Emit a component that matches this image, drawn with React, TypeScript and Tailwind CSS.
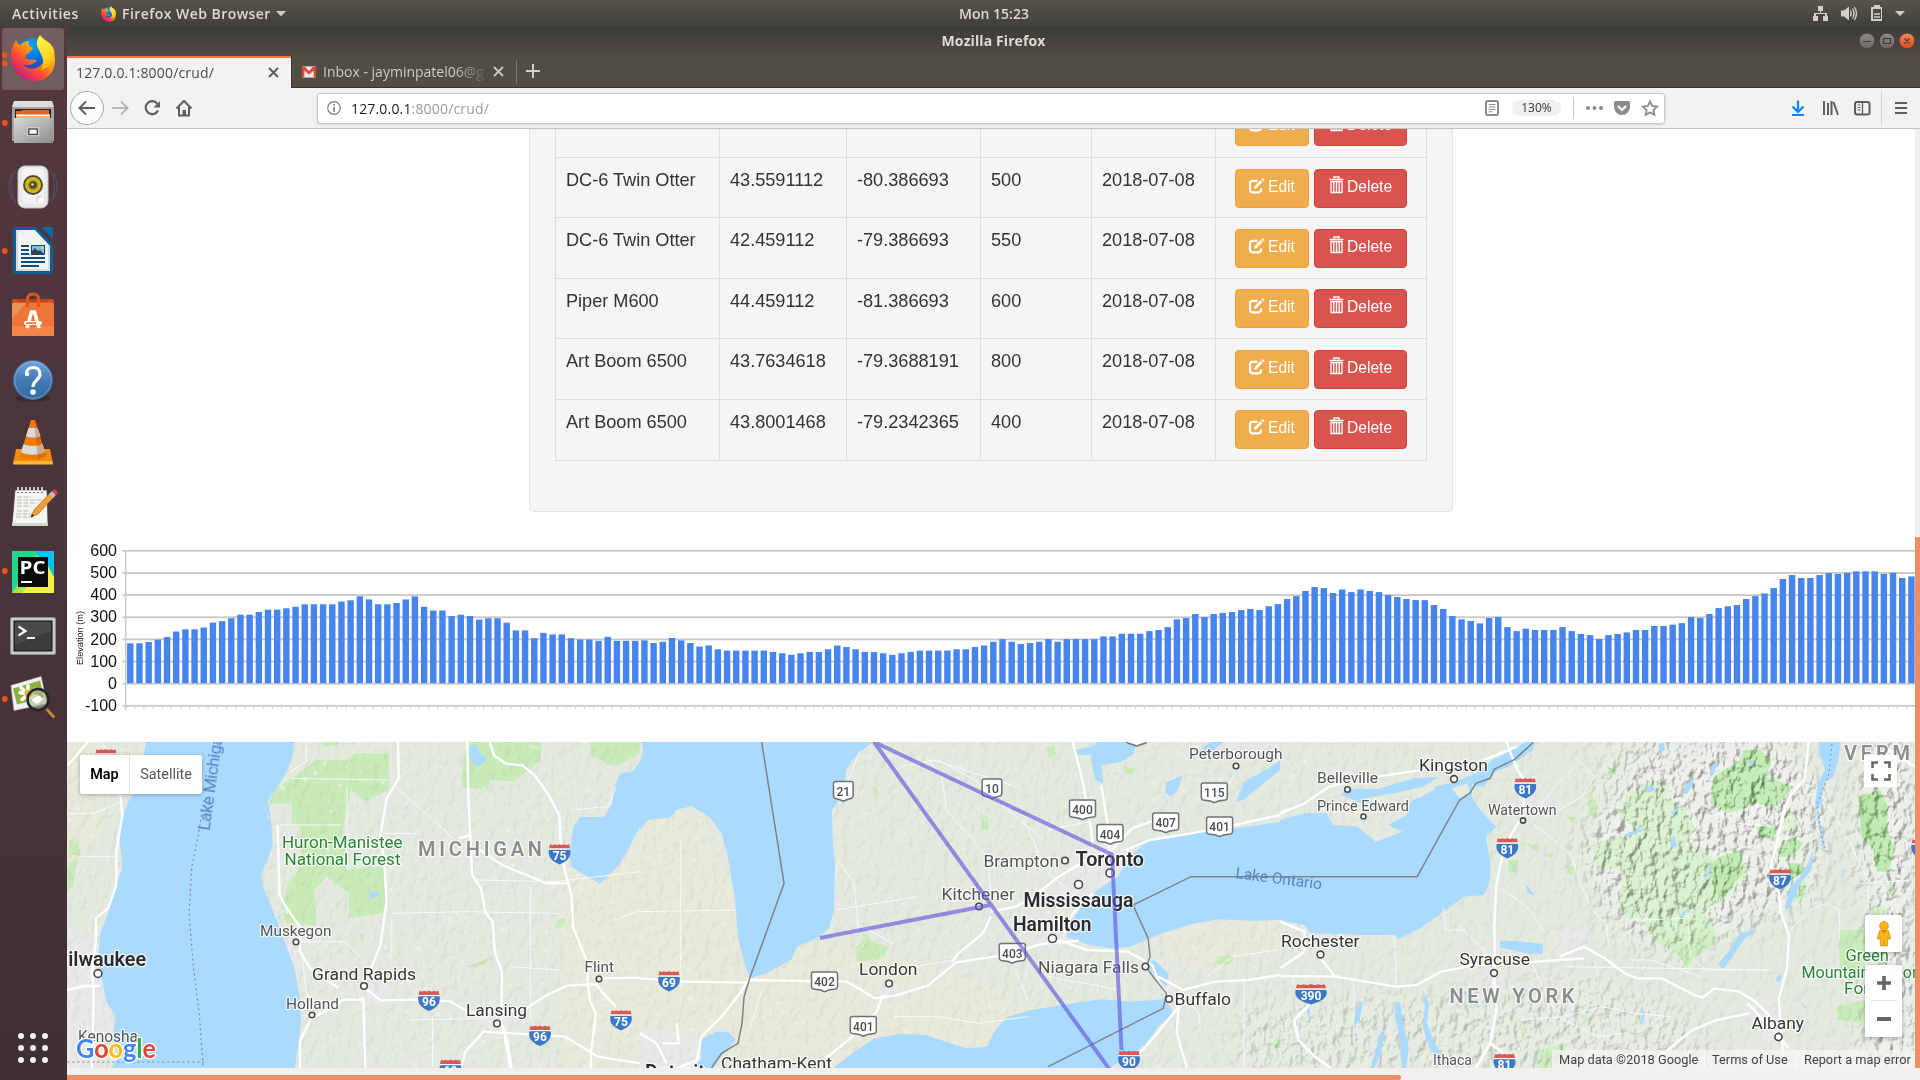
import React from 'react';

const UI = "font-['Open_Sans','Noto_Sans',sans-serif]";
const ARIAL = "font-['Liberation_Sans',Arial,sans-serif]";
const ROBOTO = 'font-[Roboto,sans-serif]';

/* ------------------------------------------------------------------ */
/* Launcher icons                                                      */
/* ------------------------------------------------------------------ */

function FirefoxGlyph() {
  return (
    <g>
      <defs>
        <radialGradient id="ffBlue" cx="0.5" cy="0.2" r="0.8">
          <stop offset="0" stopColor="#0aa5f2" />
          <stop offset="0.5" stopColor="#0a6be0" />
          <stop offset="1" stopColor="#2b2b83" />
        </radialGradient>
        <linearGradient id="ffFire" x1="0.85" y1="0.1" x2="0.15" y2="0.9">
          <stop offset="0" stopColor="#ffd72e" />
          <stop offset="0.35" stopColor="#ff9a12" />
          <stop offset="0.65" stopColor="#ff4a36" />
          <stop offset="1" stopColor="#c4158c" />
        </linearGradient>
        <linearGradient id="ffTail" x1="0.3" y1="0" x2="0.7" y2="1">
          <stop offset="0" stopColor="#fff44a" />
          <stop offset="0.6" stopColor="#ffdb20" />
          <stop offset="1" stopColor="#ffa40f" />
        </linearGradient>
      </defs>
      <circle cx="32" cy="30" r="19" fill="url(#ffBlue)" />
      <path
        d="M16 13c-5 7-6 15-4 23 3 11 12 18 23 18 12 0 20-9 20-21 0-7-3-12-6-16l-6-3c3 9 4 18-1 23-5 6-15 6-19 0 4 2 8 1 11-1 2-1 3-2 2-3-3-1-8 1-10-2-1-3 2-4 3-5 1-2 3-3 4-5-3-1-5-3-4-7-4 0-7 2-9 4-2-1-3-3-4-5z"
        fill="url(#ffFire)"
      />
      <path d="M40 8c-4 5-4 10-1 15 3 6 7 12 2 20 10-2 15-11 13-20-2-6-6-8-9-10-2-2-4-3-5-5z" fill="url(#ffTail)" />
    </g>
  );
}

function FilesGlyph() {
  return (
    <g>
      <defs>
        <linearGradient id="fileG" x1="0" y1="0" x2="1" y2="1">
          <stop offset="0" stopColor="#d8d8d8" />
          <stop offset="1" stopColor="#8c8c8c" />
        </linearGradient>
      </defs>
      <path d="M14 10h38l2 8v32H12V18z" fill="#a2a2a2" />
      <path d="M14 10h38l2 6H12z" fill="#dedede" />
      <path d="M15 18h36v9H15z" fill="#2c2220" />
      <path d="M16 20l5 0 1-1h27v8H16z" fill="#e0641e" />
      <path d="M16 23h34v4H16z" fill="#f6b370" />
      <path d="M17 24h32v1H17z" fill="#fff" />
      <path d="M14 27h39v25H14z" fill="url(#fileG)" />
      <rect x="26.500" y="35.500" width="13" height="10" rx="1.500" fill="#cfcfcf" stroke="#b5b5b5" />
      <rect x="28.800" y="38" width="8.500" height="5.500" fill="#f2f2f2" stroke="#3a3a3a" strokeWidth="1.200" />
    </g>
  );
}

function RhythmboxGlyph() {
  return (
    <g>
      <g fill="none" stroke="#54699a" strokeWidth="1.200" opacity="0.45">
        <path d="M16 14c-6 9-6 24 0 34M12 18c-4 8-4 17 0 26M50 14c6 9 6 24 0 34M54 18c4 8 4 17 0 26" />
      </g>
      <rect x="18" y="11" width="30" height="42" rx="7" fill="#e9eae8" stroke="#c3c4c1" />
      <rect x="22" y="13" width="22" height="36" rx="6" fill="#f7f7f6" opacity="0.7" />
      <circle cx="33" cy="30" r="10" fill="#4d4a46" />
      <circle cx="33" cy="30" r="8" fill="#d4b816" />
      <circle cx="33" cy="30" r="4.800" fill="#8f7a0c" />
      <circle cx="33" cy="30" r="3.200" fill="#45484b" />
      <circle cx="32.500" cy="29.500" r="1.300" fill="#dcdcdc" />
      <circle cx="39.500" cy="44" r="3.500" fill="#d5d6d3" />
      <circle cx="40.500" cy="45" r="3" fill="#fff" />
    </g>
  );
}

function WriterGlyph() {
  return (
    <g>
      <path d="M16 8h20l17 18v26a3 3 0 0 1-3 3H16a3 3 0 0 1-3-3V11a3 3 0 0 1 3-3z" fill="#0b5f95" />
      <path d="M41 8h10a2 2 0 0 1 2 2v10z" fill="#0b6aa8" />
      <path d="M16 11h19l15 16v25H16z" fill="#f3f3f3" />
      <path d="M16 11v41h34V27M18 11v39h30V27z" fill="#c9c9c9" fillRule="evenodd" opacity="0.6" />
      <path d="M21 26h8v2h-8zM21 30h8v2h-8zM21 34h8v2h-8zM21 38h24v2H21zM21 42h24v2H21zM21 46h18v2H21z" fill="#07507d" />
      <rect x="31" y="26" width="14" height="10" fill="#07507d" />
      <rect x="32" y="27" width="12" height="8" fill="#77c0ef" />
      <path d="M32 35v-3l3-3 3 3 2-1 4 4z" fill="#3a4045" />
      <circle cx="42.500" cy="28.500" r="1.500" fill="#f2c24a" />
    </g>
  );
}

function SoftwareGlyph() {
  return (
    <g>
      <path d="M12 16h42v6H12z" fill="#b8451a" />
      <path d="M14 16l5 3 27 0 6-3v6H14z" fill="#d65a22" />
      <path d="M12 20h42v33H12z" fill="#ef7437" />
      <path d="M12 43h42v10H12z" fill="#f38549" />
      <path d="M12 20h14L12 36z" fill="#e79a5c" opacity="0.8" />
      <path d="M27.500 24v-8q0-5 5.500-5t5.500 5v8" fill="none" stroke="#e0561f" strokeWidth="3" />
      <path d="M27 45l4.500-16h3L39 45" fill="none" stroke="#fff" strokeWidth="3.600" />
      <rect x="24" y="38" width="18" height="4" rx="2" fill="#fff" />
      <rect x="26" y="39.300" width="10" height="1.600" fill="#ef7437" />
    </g>
  );
}

function HelpGlyph() {
  return (
    <g>
      <defs>
        <linearGradient id="helpG" x1="0" y1="0" x2="0" y2="1">
          <stop offset="0" stopColor="#78a6dd" />
          <stop offset="0.5" stopColor="#4379b5" />
          <stop offset="1" stopColor="#2f6c9f" />
        </linearGradient>
      </defs>
      <ellipse cx="33" cy="51" rx="17" ry="4" fill="#2b1f24" opacity="0.45" />
      <circle cx="33" cy="33" r="19.500" fill="url(#helpG)" stroke="#3a6a9a" />
      <circle cx="33" cy="33" r="18.300" fill="none" stroke="#9cc1ea" strokeWidth="0.800" opacity="0.7" />
      <path d="M26.500 26c0-7 13.500-8 13.500 1 0 6-7 6.500-7 13" fill="none" stroke="#fff" strokeWidth="3.200" />
      <circle cx="27" cy="27" r="2.200" fill="#fff" />
      <circle cx="33" cy="45" r="2.800" fill="#fff" />
    </g>
  );
}

function VlcGlyph() {
  return (
    <g>
      <path d="M16 38h34l3 15H13z" fill="#f18a0d" />
      <path d="M14 50h38.500l.5 3.500H13z" fill="#ffb733" />
      <path d="M31 9h4l11 36c-4 5-22 5-26 0z" fill="#f07c05" />
      <path d="M28.500 17h9l3 8c-4 2-11 2-14.500 0z" fill="#d8dade" />
      <path d="M23.500 33c5 2.500 14 2.500 19 0l2.500 8c-5 3.500-19 3.500-24 0z" fill="#d8dade" />
      <path d="M34 9h1l11 36c-2 2-5 3-8 3.500z" fill="#b65203" opacity="0.35" />
    </g>
  );
}

function GeditGlyph() {
  return (
    <g>
      <path d="M15 15h32l1 35H12z" fill="#f4f4f0" stroke="#3c3a37" strokeWidth="0.700" />
      <path d="M12 48h36v3H12z" fill="#d5d6d0" />
      <g stroke="#efefef" strokeWidth="1.600">
        <path d="M18 12v5M22 12v5M26 12v5M30 12v5M34 12v5M38 12v5M42 12v5" />
      </g>
      <g stroke="#54524f" strokeWidth="0.800">
        <path d="M17 17.500h2M21 17.500h2M25 17.500h2M29 17.500h2M33 17.500h2M37 17.500h2M41 17.500h2" />
      </g>
      <g stroke="#b9b9b5" strokeWidth="1" strokeDasharray="5 1.500">
        <path d="M17 22h14M17 25h26M17 28h20M17 31h14M17 36h12M16 39h22M16 42h16" />
      </g>
      <path d="M31 42l3-7L50 18l4 4-16 17z" fill="#f0a13a" stroke="#a8661a" strokeWidth="0.700" />
      <path d="M49 19l3-3 4 4-3 3z" fill="#b9bfc4" />
      <path d="M52 16q2-3 4.500-.5T56 20z" fill="#d9364a" />
      <path d="M31 42l1-3 2 2z" fill="#1b1b1b" />
    </g>
  );
}

function PyCharmGlyph() {
  return (
    <g>
      <rect x="12" y="12" width="42" height="42" fill="#21d789" />
      <path d="M36 12h18v42H42z" fill="#07c3f2" />
      <path d="M12 54l8-12 16-26 8 4 10 34z" fill="#a8e053" />
      <path d="M44 20l10 18v16H22l6-8h18z" fill="#f5ef49" />
      <rect x="18" y="18" width="30" height="30" fill="#0b0b0b" />
      <text x="19.500" y="34.500" fontSize="17" fontWeight="700" fill="#fff" className={UI} textLength="26" lengthAdjust="spacingAndGlyphs">
        PC
      </text>
      <rect x="21" y="42" width="11" height="2" fill="#fff" />
    </g>
  );
}

function TerminalGlyph() {
  return (
    <g>
      <rect x="10.500" y="14.500" width="45" height="37" rx="1.500" fill="#c9cbc8" stroke="#8f918e" />
      <rect x="14" y="18" width="38" height="30" fill="#3a3c3b" stroke="#121212" />
      <path d="M15 19h36v9L15 42z" fill="#555755" opacity="0.55" />
      <path d="M18.500 23.500l7 4.500-7 4.500" fill="none" stroke="#fff" strokeWidth="2.200" />
      <path d="M27 35h8" stroke="#fff" strokeWidth="1.800" />
    </g>
  );
}

function ImageViewerGlyph() {
  return (
    <g transform="translate(0 1.500)">
      <path d="M11 17l30-9 6 27-33 7z" fill="#f2f2ef" stroke="#c2c2be" strokeWidth="0.600" />
      <path d="M13 20l27-8 4 17-27 7z" fill="#8db13a" />
      <g stroke="#fff" strokeWidth="3.600" strokeLinecap="round">
        <path d="M20 24l17 4M22 31l13-10M28 17.500v17M21 19l13 13" />
      </g>
      <circle cx="28.500" cy="25" r="4" fill="#f0b12a" />
      <circle cx="38" cy="31" r="10.500" fill="#a8b890" fillOpacity="0.6" stroke="#23262a" strokeWidth="2.600" />
      <path d="M32 32c2-4 5-3 6-5 3 0 4 3 5 4-3 1-3 4-6 4s-3-2-5-3z" fill="#fff" />
      <path d="M46 40l8.500 9" stroke="#8c5d1e" strokeWidth="3.600" />
      <path d="M47 41l7 8" stroke="#d49a4a" strokeWidth="1.600" />
    </g>
  );
}

const LAUNCHERS: { name: string; dots: number; glyph: () => React.JSX.Element }[] = [
  { name: 'Firefox', dots: 2, glyph: FirefoxGlyph },
  { name: 'Files', dots: 1, glyph: FilesGlyph },
  { name: 'Rhythmbox', dots: 0, glyph: RhythmboxGlyph },
  { name: 'Writer', dots: 1, glyph: WriterGlyph },
  { name: 'Software', dots: 0, glyph: SoftwareGlyph },
  { name: 'Help', dots: 0, glyph: HelpGlyph },
  { name: 'VLC', dots: 0, glyph: VlcGlyph },
  { name: 'Text Editor', dots: 0, glyph: GeditGlyph },
  { name: 'PyCharm', dots: 1, glyph: PyCharmGlyph },
  { name: 'Terminal', dots: 0, glyph: TerminalGlyph },
  { name: 'Image Viewer', dots: 1, glyph: ImageViewerGlyph },
];

function Dock() {
  return (
    <aside className="flex h-[1053px] w-[67px] shrink-0 flex-col bg-linear-to-b from-[#54383d] via-[#49343b] to-[#3e3035]">
      {LAUNCHERS.map(({ name, dots, glyph: Glyph }, i) => (
        <div key={name} className="h-16 w-[67px]">
          <svg width="67" height="64" viewBox="0 0 67 64" aria-label={name}>
            {i === 0 && <rect x="2" y="1" width="62" height="62" rx="3" fill="#fff" fillOpacity="0.19" />}
            {dots === 2 && (
              <g fill="#e95420">
                <circle cx="4.800" cy="28" r="2.900" />
                <circle cx="4.800" cy="36.300" r="2.900" />
              </g>
            )}
            {dots === 1 && <circle cx="4.800" cy="32" r="2.900" fill="#e95420" />}
            <Glyph />
          </svg>
        </div>
      ))}
      <div className="mt-auto mb-[17px] ml-[18px] grid w-[30px] grid-cols-3 gap-[6px]">
        {Array.from({ length: 9 }, (_, i) => (
          <span key={i} className="size-[6px] rounded-full bg-[#f2f0ef]" />
        ))}
      </div>
    </aside>
  );
}

/* ------------------------------------------------------------------ */
/* Desktop and browser chrome                                          */
/* ------------------------------------------------------------------ */

function TopBar() {
  return (
    <header className={`${UI} relative flex h-[27px] shrink-0 items-center bg-linear-to-b from-[#57544b] to-[#403f3a] text-[14px] font-semibold text-[#dfdbd2]`}>
      <span className="ml-3 w-[68px] text-[14px] tracking-[0.55px] whitespace-nowrap">Activities</span>
      <svg className="ml-[20px]" width="17" height="20" viewBox="8 4 50 54">
        <FirefoxGlyph />
      </svg>
      <span className="ml-[5px] w-[150px] text-[14px] tracking-[0.450px] whitespace-nowrap">Firefox Web Browser</span>
      <svg className="ml-[4px]" width="10" height="6" viewBox="0 0 10 6">
        <path d="M0 0h10L5 5.500z" fill="#cfccc4" />
      </svg>
      <span className="absolute top-[3px] left-[894px] w-[200px] text-center text-[14px]">Mon 15:23</span>
      <svg className="ml-auto" width="100" height="27" viewBox="1810 0 100 27" fill="#d2cfc7">
        <path d="M1818 6h5v5h-2v2h6v3h1v5h-5v-5h2v-2h-9v2h2v5h-5v-5h1v-3h6v-2h-2z" />
        <path d="M1841 10.500h3l5-4v14l-5-4h-3z" />
        <path d="M1850.500 10.500q1.500 3 0 6M1852.500 8.500q3 5 0 10M1854.500 7q4 6.500 0 13" fill="none" stroke="#d2cfc7" strokeWidth="1.300" />
        <path d="M1872 7h2V5h6v2h2v14h-11V7zM1873 9v10h8V9z" fillRule="evenodd" />
        <path d="M1874 13.300h6v1.500h-6zM1874 16.300h6v1.500h-6z" />
        <path d="M1895 11h10l-5 5z" />
      </svg>
      <div className="w-[10px]" />
    </header>
  );
}

function TitleBar() {
  return (
    <div className={`${UI} relative flex h-[29px] shrink-0 justify-center bg-linear-to-b from-[#3c3b37] to-[#504d45]`}>
      <span className="mt-[4px] text-[14px] leading-5 font-bold tracking-[0.100px] text-[#dfdbd2]">Mozilla Firefox</span>
      <svg className="absolute top-[5px] right-[4px]" width="60" height="20" viewBox="0 0 60 20">
        <defs>
          <linearGradient id="btnGray" x1="0" y1="0" x2="0" y2="1">
            <stop offset="0" stopColor="#8f8d86" />
            <stop offset="1" stopColor="#67665f" />
          </linearGradient>
          <linearGradient id="btnClose" x1="0" y1="0" x2="0" y2="1">
            <stop offset="0" stopColor="#f58662" />
            <stop offset="1" stopColor="#df4b17" />
          </linearGradient>
        </defs>
        <circle cx="11" cy="9" r="7.900" fill="url(#btnGray)" stroke="#35342f" strokeWidth="0.700" />
        <circle cx="31" cy="9" r="7.900" fill="url(#btnGray)" stroke="#35342f" strokeWidth="0.700" />
        <circle cx="51" cy="9" r="7.900" fill="url(#btnClose)" stroke="#35342f" strokeWidth="0.700" />
        <path d="M7 9.500h8M27.500 6.500h7v5h-7zM48.500 6.500l5 5M53.500 6.500l-5 5" fill="none" stroke="#3c3b37" strokeWidth="1.200" />
      </svg>
    </div>
  );
}

function CloseX({ color }: { color: string }) {
  return (
    <svg width="11" height="11" viewBox="0 0 11 11">
      <path d="M1 1l9 9M10 1l-9 9" stroke={color} strokeWidth="1.800" />
    </svg>
  );
}

function TabStrip() {
  return (
    <div className={`${UI} flex h-8 shrink-0 border-b border-[#32312d] bg-[#504d45] text-[14px]`}>
      <div className="-mb-px flex h-8 w-[224px] items-center border-t-2 border-[#f07746] bg-[#f3f2f0] pr-[12px] pb-[2px] pl-[9px] text-[#4a4a48]">
        <span className="mr-auto w-[140px] text-[14px] tracking-[0.170px] whitespace-nowrap">127.0.0.1:8000/crud/</span>
        <CloseX color="#5a5a58" />
      </div>
      <div className="flex w-[225px] items-center border-l border-[#3a3934] pl-[10px]">
        <svg width="14" height="12" viewBox="0 0 15 12">
          <path d="M0 0h15v12H0z" fill="#ece9e6" />
          <path d="M0 0h3l4.500 5L12 0h3v12h-2.500V4.500l-5 4.500-5-4.500V12H0z" fill="#d9493c" />
        </svg>
        <span className="ml-[7px] w-[166px] overflow-hidden bg-linear-to-r from-[#d6d2c9] from-80% to-[#504d45] bg-clip-text text-[14px] whitespace-nowrap text-transparent">
          Inbox - jayminpatel06@g
        </span>
        <span className="ml-[4px]">
          <CloseX color="#cdc9c0" />
        </span>
      </div>
      <div className="mt-[4px] h-[24px] w-px bg-[#7c7971]" />
      <svg className="mt-[7px] ml-[8px]" width="16" height="16" viewBox="0 0 16 16">
        <path d="M8 1v14M1 8h14" stroke="#d6d2c9" strokeWidth="2" />
      </svg>
    </div>
  );
}

function NavBar() {
  return (
    <div className={`${UI} flex h-[41px] shrink-0 items-center border-b border-[#c5c1be] bg-[#f3f2f0]`}>
      <svg width="140" height="40" viewBox="67 88 140 40" fill="none" stroke="#5e5e5c" strokeWidth="2">
        <circle cx="87" cy="108" r="16.500" fill="#fcfcfc" stroke="#a9a9a8" strokeWidth="1" />
        <path d="M95 108H80M86 101.500L79.500 108l6.500 6.500" />
        <path d="M112 108h15M121 101.500l6.500 6.500-6.500 6.500" stroke="#b9b8b6" />
        <path d="M157.500 104a6.500 6.500 0 1 0 .5 6.500" strokeWidth="2.200" />
        <path d="M160 101v6.500h-6.500z" fill="#5e5e5c" stroke="none" />
        <path d="M176.500 108.500L184 101l7.500 7.500M179 107v8.500h10V107" />
        <path d="M182.500 110h3.500v6h-3.500z" fill="#5e5e5c" stroke="none" />
      </svg>
      <div className="ml-[110px] flex h-[31px] w-[1348px] items-center rounded-[3px] border border-[#c9c7c4] bg-white shadow-sm">
        <svg className="ml-[9px]" width="14" height="14" viewBox="0 0 14 14">
          <circle cx="7" cy="7" r="6.300" fill="none" stroke="#7e7e7c" strokeWidth="1.200" />
          <path d="M6.200 6h1.600v5H6.200zM6.200 3h1.600v1.700H6.200z" fill="#7e7e7c" />
        </svg>
        <span className="ml-[10px] text-[14px] tracking-[0.170px] whitespace-nowrap text-[#9b9b9a]">
          <span className="text-[#1c1c1c]">127.0.0.1</span>:8000/crud/
        </span>
        <svg className="ml-auto" width="16" height="18" viewBox="0 0 16 18" fill="none" stroke="#8c8c8a">
          <rect x="2" y="2" width="12" height="14" rx="1.500" strokeWidth="2" />
          <path d="M4.500 5.500h7M4.500 8h7M4.500 10.500h7M4.500 12.800h4" />
        </svg>
        <span className="ml-[12px] flex h-4 w-[49px] items-center justify-center rounded-full bg-[#f0f0f0] text-[12px] text-[#383838]">130%</span>
        <span className="ml-3 h-[22px] w-px bg-[#c9c7c4]" />
        <svg className="ml-[8px]" width="82" height="20" viewBox="1582 98 82 20">
          <g fill="#8c8c8a">
            <circle cx="1588" cy="108" r="2" />
            <circle cx="1594.500" cy="108" r="2" />
            <circle cx="1601" cy="108" r="2" />
            <path d="M1615.500 101h13a1.500 1.500 0 0 1 1.500 1.500v4.500a8 8 0 0 1-16 0v-4.500a1.500 1.500 0 0 1 1.500-1.500z" />
          </g>
          <path d="M1618 106l4 4 4-4" fill="none" stroke="#fff" strokeWidth="2" />
          <path d="M1650 101.500l2.100 4.500 4.900.6-3.600 3.400.9 4.900-4.300-2.400-4.300 2.400.9-4.900-3.600-3.400 4.900-.6z" fill="none" stroke="#8c8c8a" strokeWidth="1.800" />
        </svg>
      </div>
      <svg className="ml-auto" width="135" height="40" viewBox="1785 88 135 40" fill="none" stroke="#5e5e5c" strokeWidth="2">
        <path d="M1798 100.500v11M1792.500 106.500l5.500 5.500 5.500-5.500M1792 115h12" stroke="#0a84ff" strokeWidth="2.200" />
        <path d="M1824 101v14M1828 103v12M1831.500 101v14M1833.500 102l4.500 13" />
        <rect x="1855" y="102" width="14.500" height="12.500" rx="2" />
        <path d="M1862.500 102v12.500" strokeWidth="1.300" />
        <path d="M1857.500 105h3M1857.500 107.500h3M1857.500 110h3" strokeWidth="1" />
        <path d="M1881.500 91v34" stroke="#d4d2cf" strokeWidth="1" />
        <path d="M1895 103h12M1895 108h12M1895 113h12" />
      </svg>
    </div>
  );
}

/* ------------------------------------------------------------------ */
/* Flight table                                                        */
/* ------------------------------------------------------------------ */

const FLIGHTS = [
  ['DC-6 Twin Otter', '43.5591112', '-80.386693', '500', '2018-07-08'],
  ['DC-6 Twin Otter', '42.459112', '-79.386693', '550', '2018-07-08'],
  ['Piper M600', '44.459112', '-81.386693', '600', '2018-07-08'],
  ['Art Boom 6500', '43.7634618', '-79.3688191', '800', '2018-07-08'],
  ['Art Boom 6500', '43.8001468', '-79.2342365', '400', '2018-07-08'],
];

const COLS = 'grid grid-cols-[164px_127px_134px_111px_124px_211px]';

function RowButtons() {
  return (
    <div className="flex h-[39px] gap-[5px] text-[15.6px] leading-[23px] text-white">
      <span className="flex h-[39px] w-[74px] items-start rounded-[4px] border border-[#eea236] bg-[#f0ad4e] pt-[5px] pl-[12px]">
        <svg className="mt-[3px]" width="17" height="17" viewBox="0 0 17 17">
          <path d="M9.500 2.800H4.500a2.500 2.500 0 0 0-2.500 2.500v6.500a2.500 2.500 0 0 0 2.500 2.500h6a2.500 2.500 0 0 0 2.500-2.500V10.500" fill="none" stroke="#fff" strokeWidth="2.200" />
          <path d="M6.500 8.300L12.500 2l2 2-6 6.300-2.500.5zM13.300 1.200L14.500 0l2 2-1.200 1.200z" fill="#fff" />
        </svg>
        <span className="ml-[3px]">Edit</span>
      </span>
      <span className="flex h-[39px] w-[93px] items-start rounded-[4px] border border-[#d43f3a] bg-[#d9534f] pt-[5px] pl-[14px]">
        <svg className="mt-px" width="15" height="18" viewBox="0 0 15 18" fill="none" stroke="#fff">
          <path d="M5 2.500V1h5v1.500M.5 3.500h14" strokeWidth="1.400" />
          <path d="M2 5.500h11v11H2zM4.800 6v10M7.500 6v10M10.200 6v10" strokeWidth="1.300" />
        </svg>
        <span className="ml-[3px]">Delete</span>
      </span>
    </div>
  );
}

function FlightTable() {
  return (
    <section className={`${ARIAL} ml-[462px] h-[383px] w-[924px] rounded-b-[5px] border-x border-b border-[#e3e3e3] bg-[#f5f5f5] pl-[25px] text-[18.2px] text-[#333]`}>
      <div className="w-[872px] divide-y divide-[#ddd] border-r border-b border-[#ddd]">
        <div className={`${COLS} h-[29px]`}>
          {[0, 1, 2, 3, 4].map((i) => (
            <div key={i} className="border-l border-[#ddd]" />
          ))}
          <div className="flex flex-col justify-end overflow-hidden border-l border-[#ddd] pb-[11px] pl-[19px]">
            <RowButtons />
          </div>
        </div>
        {FLIGHTS.map((row, r) => (
          <div key={r} className={`${COLS} h-[60.400px]`}>
            {row.map((cell, c) => (
              <div key={c} className="border-l border-[#ddd] pt-[9px] pl-[10px] leading-[26px] tracking-[-0.030px] whitespace-nowrap">
                {cell}
              </div>
            ))}
            <div className="border-l border-[#ddd] pt-[10.500px] pl-[19px]">
              <RowButtons />
            </div>
          </div>
        ))}
      </div>
    </section>
  );
}

/* ------------------------------------------------------------------ */
/* Elevation chart                                                     */
/* ------------------------------------------------------------------ */

const ELEVATIONS = [
  182, 182, 188, 198, 210, 235, 245, 245, 253, 275, 282, 295, 311, 311, 323, 334, 334, 340, 347, 358, 358, 358, 358, 370, 376, 394, 380, 358,
  358, 364, 380, 394, 347, 330, 330, 305, 311, 305, 289, 295, 295, 275, 240, 240, 205, 229, 222, 222, 205, 199, 199, 193, 211, 193, 193, 193,
  195, 183, 189, 206, 195, 183, 167, 172, 155, 149, 149, 149, 149, 149, 143, 137, 130, 137, 143, 143, 155, 172, 165, 155, 143, 143, 137, 130,
  137, 143, 149, 149, 149, 149, 155, 155, 165, 172, 189, 201, 189, 179, 183, 189, 201, 189, 201, 201, 201, 201, 213, 213, 225, 225, 225, 237,
  242, 255, 290, 296, 314, 301, 314, 319, 323, 332, 337, 332, 349, 359, 382, 395, 418, 436, 431, 409, 425, 413, 425, 418, 413, 400, 391, 382,
  377, 377, 355, 337, 305, 290, 283, 272, 296, 301, 255, 237, 248, 242, 242, 242, 255, 237, 224, 219, 201, 219, 224, 231, 242, 242, 260, 260,
  266, 273, 301, 296, 314, 341, 349, 355, 382, 395, 407, 431, 472, 490, 477, 477, 490, 499, 495, 500, 507, 507, 507, 495, 500, 477, 484,
];

const yOf = (v: number) => 683.6 - v * 0.2215;

function ElevationChart() {
  return (
    <svg className={`${ARIAL} block shrink-0`} width="1848" height="230" viewBox="67 512 1848 230">
      {[600, 500, 400, 300, 200, 100, 0, -100].map((v) => (
        <g key={v}>
          <rect x="122.400" y={yOf(v) - 0.8} width="1792.600" height="1.800" fill="#c8c8c8" />
          <text x="117" y={yOf(v) + 5.2} fontSize="16" textAnchor="end" fill="#111">
            {v}
          </text>
        </g>
      ))}
      <rect x="125" y="550" width="1.500" height="160" fill="#ccc" />
      {ELEVATIONS.map((v, i) => (
        <g key={i}>
          <rect x={127.1 + i * 9.181} y={yOf(v)} width="6.400" height={v * 0.2215 - 0.4} fill="#4684ee" />
          <rect x={125 + i * 9.181} y="706" width="1" height="3" fill="#ccc" />
        </g>
      ))}
      <text transform="translate(83 665) rotate(-90)" fontSize="9.200" textLength="54" fill="#222">
        Elevation (m)
      </text>
    </svg>
  );
}

/* ------------------------------------------------------------------ */
/* Map                                                                 */
/* ------------------------------------------------------------------ */

const WATER = '#aadaff';

type Label = [string, number, number, number, number, 'city' | 'town' | 'metro' | 'park' | 'state'];

/* text, left, baseline, length, size, kind */
const LABELS: Label[] = [
  ['Huron-Manistee', 282, 848, 120.5, 16, 'park'],
  ['National Forest', 284.5, 865, 116, 16, 'park'],
  ['MICHIGAN', 418, 856, 124, 20, 'state'],
  ['Muskegon', 260, 935.5, 71.5, 15.5, 'town'],
  ['Grand Rapids', 312, 979.5, 104, 17, 'city'],
  ['Milwaukee', 51, 966, 95, 20, 'metro'],
  ['Holland', 286, 1008.5, 53, 15, 'town'],
  ['Lansing', 466, 1015.5, 61, 17, 'city'],
  ['Flint', 584.5, 972, 29.5, 15.5, 'town'],
  ['Kenosha', 78, 1041.5, 60, 16, 'town'],
  ['Peterborough', 1189, 759, 93.5, 15.5, 'town'],
  ['Brampton', 983.5, 867, 75.5, 17, 'town'],
  ['Toronto', 1075.5, 865.5, 68.5, 20, 'metro'],
  ['Mississauga', 1023.5, 907, 110, 20, 'metro'],
  ['Hamilton', 1013, 930.5, 78.5, 20, 'metro'],
  ['Kitchener', 941.5, 900, 73.5, 17, 'town'],
  ['London', 859, 975, 58.5, 17, 'city'],
  ['Niagara Falls', 1038, 973, 101, 17, 'town'],
  ['Buffalo', 1174.5, 1005, 56.5, 17, 'city'],
  ['Chatham-Kent', 721, 1068.5, 111, 16.5, 'city'],
  ['Detroit', 645, 1079, 60, 20, 'metro'],
  ['Belleville', 1317, 783, 61, 15, 'town'],
  ['Prince Edward', 1317, 811, 92, 15, 'town'],
  ['Kingston', 1419, 771, 69, 17, 'city'],
  ['Watertown', 1488, 815, 68.5, 15, 'town'],
  ['VERM', 1844, 760, 66, 20, 'state'],
  ['Rochester', 1281, 947, 78.5, 17, 'city'],
  ['Syracuse', 1459.5, 965, 70.5, 17, 'city'],
  ['NEW YORK', 1449.5, 1003, 125, 20, 'state'],
  ['Ithaca', 1433, 1064.5, 39, 15, 'town'],
  ['Albany', 1751.5, 1029, 52.5, 17, 'city'],
  ['Green', 1845.5, 961, 43.5, 16, 'park'],
  ['Mountain National', 1801.5, 978, 132, 16, 'park'],
  ['Forest', 1844, 994, 49, 16, 'park'],
];

const LABEL_FILL = { city: '#353535', town: '#555', metro: '#2b2b2b', park: '#2a8636', state: '#8c8c8c' };
const LABEL_WEIGHT = { city: 400, town: 400, metro: 600, park: 400, state: 600 };

const MARKERS: [number, number, number][] = [
  [296, 942, 2.8], [364, 986, 3.3], [98, 973.5, 3.9], [312, 1015, 2.8], [497, 1023.5, 3.3], [599, 979, 2.8], [1236, 766, 2.8],
  [1065, 860.5, 3.3], [1110, 873, 4], [1078.5, 884.5, 4], [1052.5, 938.5, 4], [979, 906.5, 3.3], [889, 983.5, 3.3],
  [1145.5, 966.5, 3.3], [1169, 999, 3.3], [1347.5, 789.5, 2.8], [1363.5, 816.5, 2.5], [1454, 779, 3.4], [1523, 820.5, 2.6],
  [1320.5, 954.5, 3.4], [1494, 973, 3.4], [1778.5, 1037, 3.6],
];

const INTERSTATES: [string, number, number][] = [
  ['75', 559.6, 854], ['96', 429, 1000.5], ['96', 540, 1035.5], ['75', 621, 1020], ['69', 450.5, 1069.5], ['94', 106, 759], ['69', 669, 981],
  ['90', 1129, 1060.5], ['81', 1525.3, 788], ['81', 1507.3, 848], ['390', 1311, 994], ['81', 1504.5, 1063.5], ['87', 1780, 879], ['89', 1922, 849],
];

const ROUTES: [string, number, number][] = [
  ['21', 843.3, 791], ['10', 992, 788.5], ['400', 1082.5, 809.5], ['404', 1110, 834], ['407', 1165.7, 822.5], ['401', 1219.6, 826.5],
  ['115', 1214.3, 792.5], ['402', 824.5, 981.5], ['401', 863.3, 1026], ['403', 1012.3, 953], ['11', 1136.7, 736],
];

function speckles() {
  let seed = 17;
  const rnd = () => {
    seed = (seed * 16807) % 2147483647;
    return seed / 2147483647;
  };
  let d = '';
  for (let i = 0; i < 560; i++) {
    const x = 67 + rnd() * 1260;
    const y = 742 + rnd() * 326;
    const w = 1.5 + rnd() * 4;
    const h = 1.5 + rnd() * 4;
    d += `M${x.toFixed(1)} ${y.toFixed(1)}l${w.toFixed(1)} ${(rnd() * 2 - 1).toFixed(1)}l${(rnd() * 2 - 1.5).toFixed(1)} ${h.toFixed(1)}l${(-w * 0.7).toFixed(1)} ${(-h * 0.3).toFixed(1)}z`;
  }
  return d;
}

const SPECKLES = speckles();

function MapLand() {
  return (
    <g>
      <rect x="67" y="742" width="1848" height="326" fill="#e4eadf" />
      <path d="M67 742h35v90l-35 40zM560 870l80-20 120 40 60 60-60 118H560zM820 940l160 40 60 40-100 60H740zM640 800l60 20 40 80-60 30-40-30zM1160 930l120-10 0 30-60 20-50-10z" fill="#ebead9" opacity="0.700" />
      <g fill="#c8ebb9">
        <path
          transform="translate(0 720) scale(0.40816 0.33333)"
          d="M775 120h75l20-20h85l-5 110-55 35-35-35-20 110 10 130 90-10 10 110-15 30-80 15v-75l-55-50-30 40 5 105-75-5-10-60 20-70 30-40-5-120-20-10v-60h-55l10-40 50-40zM1150 66h175v54l-65 65-60-5-5 28-60-3-5-25 10-90zM1445 66h123v34l-58 40-60-30zM170 360l25 2v45l-25-5zM165 440l25-35-10 90-15 20zM800 66h35l-10 10-40 5zM1365 600l20-5-5 25-20 5zM1140 740l60-25 25-8-60 35zM880 640l12 5-5 25z"
        />
        <path
          transform="translate(640 730) scale(0.40816 0.33333)"
          d="M545 605l25 30 40 15-15 35-65 10v-45l15-20zM570 165l15 20-8 20zM835 265l15-8 5 40-18 5zM995 50l20-5 5 30-18 10zM1410 680l45-5-5 25-35 5zM1545 945l23-40v50zM1185 110l30 5-10 20-18-5z"
        />
        <path
          transform="translate(1500 740) scale(0.33333)"
          d="M460 120l50 10-10 40 50 30 40 70-30 30 60 40 40 30 60-30 20 60-40 50-40 40-60 20 40 30 10 70-60 35-30 35-40-50-50-20-40-60 20-20-70 5-25-50 15-80-20-20-60 0-10-70 60-20h60v-30l-40-40 20-60zM860 200l30 30-10 40-30 10zM1015 570h80v130l-75-10zM1010 800l85-20v70l-80-10zM265 150l30 50-5 30-25-10zM75 310l45 5-10 20zM195 375l30 5-5 25-20-5zM130 345l30-10-5 20zM25 360l30 0-5 35-25 0zM235 820l30 10-10 20zM20 820l20 5-5 25zM120 930l70-20 10 70-90 5zM60 860l20 0-10 30zM200 230l30 0-10 20zM1110 500l40 0 10 30-50 0zM1145 415l30 20 20 50-30-30zM890 410l30 20 0 40-40 15z"
        />
      </g>
      <path
        transform="translate(1500 740) scale(0.33333)"
        fill="#9fe08a"
        d="M640 110l80-50 10-30h50l35 30-15 50 80 30-50 60-60-10-50 20-40 10-50-30zM720 330l10 70-40 40-25 50-25-50-20-60 40-30zM830 330l50-40 30 20-30 40h-40zM770 260l60-5-10 45-45-10zM1075 170l65-20 25 50-5 60 25 70-20 65h-35l-10-65-35-40zM865 370l45 0 0 30-40 20zM320 80l30 10-5 15z"
      />
      <path d={SPECKLES} fill="#f1f0ee" opacity="0.75" />
      <g fill="#e9e9e9">
        <path d="M67 930l30 10 8 30 10 60-20 38H67zM360 985l30 0 5 18-40 0zM640 1025l30 8 25 5 5 30h-60zM1080 850l40-10 20 15-30 30-40 20-20-10zM1040 930l30 5-10 15-25-5zM1155 955l20 20 10 40-15-10zM878 985l20 0 0 12-20 0zM485 1015l25 0-3 20-22-3zM1745 1010l25-15 15 40-10 20zM1480 970l20-5 5 25-20-3zM1555 930l30 0 0 20-30 0zM285 940l12 10 5 20-12-5z" />
      </g>
      {/* hillshade: barely visible on the plains, stronger over the eastern ranges */}
      <rect x="67" y="742" width="1848" height="326" filter="url(#relief)" className="mix-blend-multiply" opacity="0.045" />
      <g mask="url(#hills)">
        <rect x="1040" y="742" width="875" height="326" filter="url(#relief)" className="mix-blend-multiply" opacity="0.44" />
      </g>
    </g>
  );
}

function MapRoads() {
  return (
    <g fill="none" stroke="#fff" strokeLinejoin="round">
      <g strokeWidth="2.400">
        <g transform="translate(0 720) scale(0.40816 0.33333)">
          <path
            vectorEffect="non-scaling-stroke"
            d="M295 225l5 60-15 110 0 100-20 70-30 30v70l-10 90 5 60-5 229M165 810l40-12 40 0M215 66l-35 50-15 20M1145 66l2 150 5 130 5 120 22 40 10 70 18 30 5 90 18 60-2 150 15 60 12 88M1200 66l10 40 30 25 40 5 30 30 35 60 25 60 5 110 10 60 15 70 5 100 15 45 20 60v50l5 60 15 40-12 120 0 100M1155 345l-30 10M1170 385l60 50 60 30 50 25h55M680 315l5 210 15 35 35 60v75l25 50 70 60M975 66l2 110-30 60-15 110 10 90 5 110-15 130-20 60-20 45 10 30 30 30 90-2 80 5 50 35M735 1044l0-80 25-65 70-50 10-10 50 0M890 830l5 214M1140 880l70-5 80-10 50-40 50-28 70-5 20 30 30 40M1185 935l200 15 80 60 103 20M1185 935l-45 60-10 49M1235 940l15 104M1470 775l98-2"
          />
        </g>
        <g transform="translate(640 730) scale(0.40816 0.33333)">
          <path
            vectorEffect="non-scaling-stroke"
            d="M0 745l110 10 155 3M150 920l-10 70-40 20M150 920l50-60 45-70 20-40 240 5 30 20 40 30 50-8 80-30 70-70 110-20 100-35 90-10M455 985l60-60 65-80 15-50M860 560l-20 50-60 60-15 25M860 545l60-15 40-25 60-60 80-60 60-30 45-60 70-30M1060 36l25 120 20 140 5 60M1130 165l15 110 5 90M1190 360l60-30 100-20 90-20 128-35M1010 625l25 10 60 25 100 5 60 40 20 60 25 40M1040 610l20-60 50-60M1210 990l50-70 60-90M1320 830l-5 80 25 104M1270 740l60 40 80-25 80-5 78-15M90 880l5 60-40 0M0 910l40 30 25 60"
          />
        </g>
        <g transform="translate(1280 730) scale(0.40816 0.33333)">
          <path
            vectorEffect="non-scaling-stroke"
            d="M0 250l60-30 60-50 90-25 110-20 100-15 60-10 100-50M555 36l25 80 20 40-5 100-30 60-20 60-15 90-5 120 2 130-5 50M0 715l60-50 0-60-60-30M90 670l45 70 150 30 50-5 60-40 80-20 100-5 110-10 60-5M0 738l150 2M525 740l5 100-15 100-35 74M515 940l45 40M685 680l60-30 50 35 50 45 30 15 60 0 80 50 20 8 30-28 60 10 40 30 40 50M1295 36l-5 60-5 50-40 60-15 60-10 60-18 80 20 80 5 60 20 70-5 100-20 90 5 80 5 90 5 58M1150 850l-80 20-60 30-60 60-40 40M1145 820l80 100 20 35M75 820l-40 50 10 60 40 50 40 34M1490 60l78 60"
          />
        </g>
      </g>
      <g strokeWidth="1" opacity="0.8">
        <g transform="translate(0 720) scale(0.40816 0.33333)">
          <path
            vectorEffect="non-scaling-stroke"
            d="M715 175l235 5M970 200l140 155M685 315l150 0M850 200l0 250M735 665l110 0 50 60M960 580l180-5 230 5M1160 480l200 5 208-30M170 280l60 0 60-30M200 410l80 0M250 66l30 60M1400 270l90-10 20-60M1000 900l200-5M1020 340l-80 0M750 66l0 60-40 30M1510 600l58-30M1250 740l120 10M740 700l10 120 50 60M960 600l0 100M1060 890l0 150M1300 500l0 400"
          />
        </g>
        <g transform="translate(640 730) scale(0.40816 0.33333)">
          <path
            vectorEffect="non-scaling-stroke"
            d="M540 60l-30 90M485 390l40 70 10 140-60 20M700 80l40 60 10 100 60 80 40 60 10 100M730 90l90 60 110 120 60 60M940 270l60 160 40 40M0 545l235-5M100 330l0 440M620 640l-90-60M770 690l-100 20-60 40M1000 300l100-25M480 540l200-40M620 860l110 0 100 20 120-20M920 720l30 90M1000 740l180 40M1330 790l40 60 0 30M1460 130l-50 80M1390 740l60-60 110-20M640 110l80-20 200 80M300 780l-30 110M1480 740v270"
          />
        </g>
        <g transform="translate(1280 730) scale(0.40816 0.33333)">
          <path
            vectorEffect="non-scaling-stroke"
            d="M620 280l90 90 30 100 20 60 40 60 5 60M640 270l100-70 30-60-50-60M545 480l60 50 45 80M600 290l60-100 60-80M440 590l60 70 20 40M280 615l5 150M400 530l5 70 50 0M830 630l60-60 100-5 50-60M1000 560l5 120 40 40 150 0M700 710l500 10M590 870l100-10 100-30 80 20 90 10M1200 340l60-20M1250 600l50-60 40-20 30 20 0 90M1330 200l50 100 60 150 0 100M1420 460l130-10M1030 220l90 60 90 10M770 690l10 60M620 710l60 150 100 60 60-10M180 740l0 200M1000 210l20 90-40 80M860 690l50 0 120 50"
          />
        </g>
      </g>
    </g>
  );
}

function MapWater() {
  return (
    <g fill={WATER}>
      <path
        transform="translate(0 720) scale(0.40816 0.33333)"
        d="M358 66l-6 39-7 95-27 35-18 55-7 70 7 80-20 70-15 70-20 60-3 60 6 70 14 80 21 35-8 75 15 50-18 34H722l10-84 6-60-5-80-13-80-30-100-25-80-20-60-5-40 15-40 13-40-3-70-17-45 17-40 20-35 15-30 15-40 7-54zM1568 125l-18 30-30 5-15 40-5 50-20 40-60 2-15 28-10 80 5 40 40 30 30 22 50-62 35-80 13-30zM1145 85l20-12 8 20 20 25-20 22-18-15zM650 255l8-5 5 50-8-5zM905 520l20-8 5 15-25 10zM690 580l-12 20 8-5z"
      />
      <path
        transform="translate(640 730) scale(0.40816 0.33333)"
        d="M0 95l8-25-3-34H570l-25 24-25 30-15 30-5 70-30 50 2 90 6 70-3 140-10 50-25 30-55 30-15 40-60 40-40 15-15-45-15-80-8-120-17-120-15-70-30-50-45-32-35 12-15 22-55 8-20 30zM185 905h30l20 25-20 30-15 15-20 39h-50l20-29-2-55zM475 1014l45-44 55-45 65-13 60 3 50 20 50 20 50-5 20-50 30-40 60-20 100-20 70-12 70 7 80-7 20 22 5 20-35 40-30 50-30 30-60 44zM1568 275l-88 17-80 8-70 18-70 7-30 20-40 55-20 40-50 40-40 50-25 50-10 40 55 25 60 10 40-5 80-40 80-30 60-12 80 4 68-2zM1060 60l50-10 10-14h95l-5 34-30 25-50 10 5 55-20-10-5-30-5-45h-40zM1460 215l20-60 60-40 28-25v30l-50 50-40 40zM1285 205l5-50 15-5 25-15-15 50-15 15-10-10-10 15zM1240 700l20-10 35 40-5 40-20-20zM1360 70l40-34h30l-50 50z"
      />
      <path
        transform="translate(1280 730) scale(0.40816 0.33333)"
        d="M0 270l60-20h55l15 35 60 5 45 45 65-30-35-20 45-30 10-40 60-45 50-15 50-25 40-40 50-30 30-24h25l-5 24-60 50-40 20-20 40-30-5v35l20 40 40 50-25 30 10 80v50l-15 45-50 5-50 45-50 45-60 38-10-13-80 0-50-3-75-2-15-25-60-15zM150 195l10-18 80 0 90-32 60-5-40 30-70 20-70 15 40 30-50-15z"
      />
      <path transform="translate(1280 730) scale(0.40816 0.33333)" fill="#e9ebdc" d="M330 190l40-25 10 12-40 28zM420 175l40-15 5 25-25 20zM150 240l60-20 60 0-30 30-60 10z" />
      <path
        transform="translate(1280 730) scale(0.40816 0.33333)"
        d="M350 780l15 40-5 60 20 60 30 60-20 0-25-50-15-60 5-60zM283 815l12 5 8 70 12 60-5 64h-12l-5-90-12-60zM195 815l8 5-8 50-20 30 10-50zM245 910l12-10-10 70-15 44h-10zM450 780l40 50-5 5-35-45zM600 765l5 20-15-5zM885 840l10 5-5 40zM65 840l8-5 0 40z"
      />
      <path
        transform="translate(1500 740) scale(0.33333)"
        d="M958 6h64l-7 54-15 50-30 20-5 60-15 25-5-25 10-60 20-40-17-50zM940 325l-5 65-35 40-20 50-20 35-5-15 15-60 30-30 25-40zM770 572l-40 28-25 40-35 48-15-18 35-40 30-50zM0 602l60 2 68 8v30l-48-2-80-18zM510 295l15-5 5 30-15 5zM380 280l50-15-5 10-50 15zM550 150l25-35 5 15-20 35zM515 215l30-20-25 30zM435 145l25-10 5 15-20 8zM620 400l25-40-15 40-20 25zM540 525l30-25-20 30zM635 75l20-10-15 40h-10zM745 65l20-5-10 20zM1022 410l12-25 2 5-10 25zM830 710l18-10-8 25-12-2zM898 785l20 15-2 8zM75 430l30 35-20-5zM420 850l10-40 6 5-10 40zM475 15l15-8 5 22-12 8z"
      />
      <path d="M1817 812l4 20 3 20" fill="none" stroke={WATER} strokeWidth="2" />
    </g>
  );
}

function MapBorders() {
  return (
    <g fill="none" stroke="#7d8387" strokeWidth="1.500">
      <path
        transform="translate(640 730) scale(0.40816 0.33333)"
        vectorEffect="non-scaling-stroke"
        d="M298 36l55 424-83 280-15 60-5 80-10 60-40 30-25 44M1568 440h-218l-142 85 37 100 5 55-10 30 20 35 30 45-8 45-282 175"
      />
      <path transform="translate(1280 730) scale(0.40816 0.33333)" vectorEffect="non-scaling-stroke" d="M0 440h336l104-230 25-20 15-30 35-15 10-27 50-30 45-50" />
      <path
        transform="translate(0 720) scale(0.40816 0.33333)"
        vectorEffect="non-scaling-stroke"
        strokeDasharray="2 3"
        strokeWidth="1.100"
        d="M500 240l-15 110-15 90-7 140 10 150 15 150 10 164M165 1026h335"
      />
      <path d="M1832 744l-3 30-12 30 4 28 5 20" strokeDasharray="2 3" strokeWidth="1" stroke="#6d99b8" />
    </g>
  );
}

function InterstateShield({ n, x, y }: { n: string; x: number; y: number }) {
  const k = n.length > 2 ? 1.45 : 1;
  return (
    <g transform={`translate(${x} ${y})`}>
      <g transform={`scale(${k} 1)`}>
        <path d="M-9.500-9.800q2.500 1.500 4.500 0 2.500 1.500 5-.2 2.500 1.700 5 .2 2 1.500 4.500 0l1 4.300h-21z" fill="#d85a55" />
        <path d="M-10.500-4.300h21q1.500 5.500-2.500 9.800-3 3.200-8 5-5-1.800-8-5-4-4.300-2.500-9.800z" fill="#3b78c8" />
        <path d="M-10.500-5h21" stroke="#fff" strokeWidth="1" />
      </g>
      <text y="5.800" textAnchor="middle" fontSize="12" fontWeight="700" fill="#fff">
        {n}
      </text>
    </g>
  );
}

function RouteShield({ n, x, y }: { n: string; x: number; y: number }) {
  const w = n.length > 2 ? 13 : 9.8;
  return (
    <g transform={`translate(${x} ${y})`}>
      <path
        d={`M${-w + 2}-9.500H${w - 2}q2 0 2 2V5q0 2-2 2.500L4 8.500 0 10.300-4 8.500-${w - 2} 7.500q-2-.5-2-2.500V-7.500q0-2 2-2z`}
        fill="#fff"
        stroke="#6f7173"
        strokeWidth="1.500"
      />
      <text y="4.500" textAnchor="middle" fontSize="12" fontWeight="500" fill="#4c4c4c">
        {n}
      </text>
    </g>
  );
}

function MapCanvas() {
  return (
    <svg className={`${ROBOTO} block`} width="1848" height="326" viewBox="67 742 1848 326">
      <defs>
        <filter id="relief" x="0" y="0" width="1" height="1" colorInterpolationFilters="sRGB">
          <feTurbulence type="fractalNoise" baseFrequency="0.13 0.085" numOctaves="3" seed="8" />
          <feDiffuseLighting surfaceScale="6" diffuseConstant="1.300" lightingColor="#fff" result="lit">
            <feDistantLight azimuth="225" elevation="56" />
          </feDiffuseLighting>
          <feColorMatrix type="saturate" values="0" />
        </filter>
        <filter id="soft" x="-0.3" y="-0.3" width="1.600" height="1.600">
          <feGaussianBlur stdDeviation="14" />
        </filter>
        <mask id="hills" maskUnits="userSpaceOnUse" x="1040" y="742" width="875" height="326">
          <g filter="url(#soft)" fill="#fff">
            <path d="M1640 742h150l40 60-20 100-60 20-70 30-60-20-40-80 40-50z" opacity="0.800" />
            <path d="M1700 742h80v80l-60 10zM1870 742h45v326h-50l10-150-20-90z" opacity="0.900" />
            <path d="M1240 1010l220-10 120-20 100 30 40 60h-480z" opacity="0.400" />
            <path d="M1600 742h60v200l-50-20-20-80z" opacity="0.350" />
          </g>
        </mask>
      </defs>
      <MapLand />
      <MapWater />
      <MapRoads />
      <MapBorders />
      {INTERSTATES.map(([n, x, y], i) => (
        <InterstateShield key={i} n={n} x={x} y={y} />
      ))}
      {ROUTES.map(([n, x, y], i) => (
        <RouteShield key={i} n={n} x={x} y={y} />
      ))}
      {MARKERS.map(([x, y, r], i) => (
        <circle key={i} cx={x} cy={y} r={r} fill="#fff" stroke="#4a4a4a" strokeWidth="1.600" />
      ))}
      {LABELS.map(([text, x, y, len, size, kind]) => (
        <text
          key={text}
          x={x}
          y={y}
          fontSize={size}
          fontWeight={LABEL_WEIGHT[kind]}
          textLength={len}
          lengthAdjust={kind === 'state' ? 'spacing' : 'spacingAndGlyphs'}
          fill={LABEL_FILL[kind]}
          stroke="#fff"
          strokeOpacity="0.750"
          strokeWidth="2.600"
          strokeLinejoin="round"
          paintOrder="stroke"
        >
          {text}
        </text>
      ))}
      <g fill="#5583c4">
        <text transform="translate(209.500 831) rotate(-82)" fontSize="17" textLength="104">
          Lake Michigan
        </text>
        <text transform="translate(1235 878) rotate(7.500)" fontSize="15.500" textLength="87">
          Lake Ontario
        </text>
      </g>
      <g fill="none" stroke="#5a50dc" strokeOpacity="0.620" strokeWidth="3.900">
        <path d="M820 938L990.500 905M1110 1070L874 742 1112 854.500 1121.500 1050" strokeLinejoin="bevel" />
      </g>
      <text x="76" y="1058" fontSize="26" textLength="80" lengthAdjust="spacingAndGlyphs" className="font-[Lato,sans-serif]" fontWeight="700" stroke="#fff" strokeWidth="2.500" paintOrder="stroke">
        <tspan fill="#4285f4">G</tspan>
        <tspan fill="#ea4335">o</tspan>
        <tspan fill="#fbbc05">o</tspan>
        <tspan fill="#4285f4">g</tspan>
        <tspan fill="#34a853">l</tspan>
        <tspan fill="#ea4335">e</tspan>
      </text>
    </svg>
  );
}

function MapView() {
  return (
    <section className={`${ROBOTO} relative h-[326px] w-[1848px] shrink-0 overflow-hidden`}>
      <MapCanvas />
      <div className="absolute top-[13px] left-[13px] flex h-[39px] rounded-[2px] bg-white text-[14.4px] shadow-[0_1px_4px_rgba(0,0,0,0.3)]">
        <span className="flex w-[50px] items-center justify-center border-r border-[#e2e2e2] font-semibold text-black">Map</span>
        <span className="flex w-[72px] items-center justify-center text-[#565656]">Satellite</span>
      </div>
      <div className="absolute top-[13px] right-[18px] flex h-[32px] w-[33px] items-center justify-center bg-white">
        <svg width="20" height="20" viewBox="0 0 20 20" fill="none" stroke="#666" strokeWidth="2.600">
          <path d="M1.500 7V1.500H7M13 1.500h5.500V7M18.500 13v5.500H13M7 18.500H1.500V13" />
        </svg>
      </div>
      <div className="absolute top-[173px] right-[13px] flex h-[37px] w-[37px] items-center justify-center rounded-[2px] bg-white shadow-[0_1px_4px_rgba(0,0,0,0.3)]">
        <svg width="16" height="26" viewBox="0 0 16 26">
          <path d="M3.500 9.500q4.500-1.500 9 0l2.300 8-2 .8-1-2.300-.3 9H4.500l-.3-9-1 2.300-2-.8z" fill="#fbb616" stroke="#c98a20" strokeWidth="0.700" />
          <circle cx="8" cy="5" r="4.400" fill="#fbb616" stroke="#c98a20" strokeWidth="0.700" />
          <path d="M5.500 9.500L8 12.500l2.500-3z" fill="#e0701c" />
          <path d="M8 18v7" stroke="#c98a20" strokeWidth="0.800" />
        </svg>
      </div>
      <div className="absolute top-[223px] right-[13px] flex h-[72px] w-[37px] flex-col items-center rounded-[2px] bg-white shadow-[0_1px_4px_rgba(0,0,0,0.3)]">
        <svg className="mt-[11px]" width="14" height="14" viewBox="0 0 14 14">
          <path d="M7 0v14M0 7h14" stroke="#666" strokeWidth="3.600" />
        </svg>
        <span className="mt-[10px] h-px w-[25px] bg-[#e2e2e2]" />
        <span className="mt-[16px] h-[4px] w-[14px] bg-[#666]" />
      </div>
      <div className="absolute right-0 bottom-0 flex h-[18px] w-[363px] items-center bg-[#f5f5f5]/75 pt-px text-[12.8px] whitespace-nowrap text-[#444]">
        <span className="ml-[7px] w-[145px]">Map data ©2018 Google</span>
        <span className="w-[92px] border-l border-white/60 pl-[7px]">Terms of Use</span>
        <span className="border-l border-white/60 pl-[7px]">Report a map error</span>
      </div>
    </section>
  );
}

/* ------------------------------------------------------------------ */

export default function App() {
  return (
    <div className="flex h-[1080px] w-[1920px] flex-col overflow-hidden bg-white">
      <TopBar />
      <div className="flex h-[1053px]">
        <Dock />
        <main className="flex h-[1053px] w-[1853px] flex-col">
          <TitleBar />
          <TabStrip />
          <NavBar />
          <div className="flex h-[939px] w-[1853px]">
            <div className="flex h-[939px] w-[1848px] flex-col">
              <FlightTable />
              <ElevationChart />
              <MapView />
            </div>
            <div className="flex h-[939px] w-[5px] flex-col bg-[#f1f0ee]">
              <div className="mt-[408px] h-[531px] bg-[#f08d68]" />
            </div>
          </div>
          <div className="flex h-3 bg-[#f1f0ee] pt-[7px]">
            <div className="h-[5px] w-[1334px] rounded-r-sm bg-[#f08d68]" />
          </div>
        </main>
      </div>
    </div>
  );
}
